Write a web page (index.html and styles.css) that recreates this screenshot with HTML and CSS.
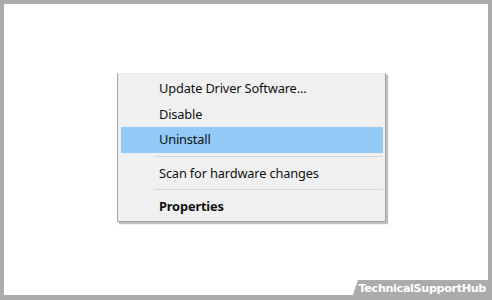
FILE: index.html
```html
<!DOCTYPE html>
<html>
<head>
<meta charset="utf-8">
<link rel="stylesheet" href="styles.css">
</head>
<body>
<div class="frame">
  <div class="menu">
    <div class="item">Update Driver Software...</div>
    <div class="item">Disable</div>
    <div class="item active">Uninstall</div>
    <div class="sep"></div>
    <div class="item">Scan for hardware changes</div>
    <div class="sep"></div>
    <div class="item bold">Properties</div>
  </div>
  <div class="badge"><span>TechnicalSupportHub</span></div>
</div>
</body>
</html>
```

FILE: styles.css
```css
html, body {
  margin: 0;
  padding: 0;
  background: #ababab;
}
.frame {
  position: relative;
  box-sizing: border-box;
  width: 492px;
  height: 300px;
  border: 4px solid #ababab;
  border-bottom-width: 5px;
  background: #ffffff;
  padding: 69px 0 0 113px;
  overflow: hidden;
}
.menu {
  width: 269px;
  box-sizing: border-box;
  background: #f0f0f0;
  border: 1px solid #a3a3a3;
  border-top-color: #ececec;
  box-shadow: 2px 2px 1px rgba(0,0,0,0.25);
  padding: 2px 2px 1px 3px;
  font-family: "Noto Sans", "Open Sans", sans-serif;
  font-size: 12.8px;
  letter-spacing: -0.15px;
  color: #101010;
}
.item {
  height: 25.5px;
  line-height: 25px;
  padding-left: 38px;
}
.item.active {
  background: #91c9f7;
}
.item.bold {
  font-weight: bold;
}
.sep {
  height: 1px;
  background: #d7d7d7;
  margin: 3px 0 4px 33px;
}
.badge {
  position: absolute;
  right: -4px;
  bottom: -5px;
  width: 141px;
  height: 20px;
  background: #ababab;
  clip-path: polygon(7px 0, 100% 0, 100% 100%, 0 100%);
  display: flex;
  align-items: center;
  justify-content: flex-end;
  padding-right: 6px;
  box-sizing: border-box;
}
.badge span {
  color: #ffffff;
  font-family: "DejaVu Sans", sans-serif;
  font-weight: bold;
  font-size: 11.2px;
  letter-spacing: -0.35px;
  padding-bottom: 3px;
}
```
